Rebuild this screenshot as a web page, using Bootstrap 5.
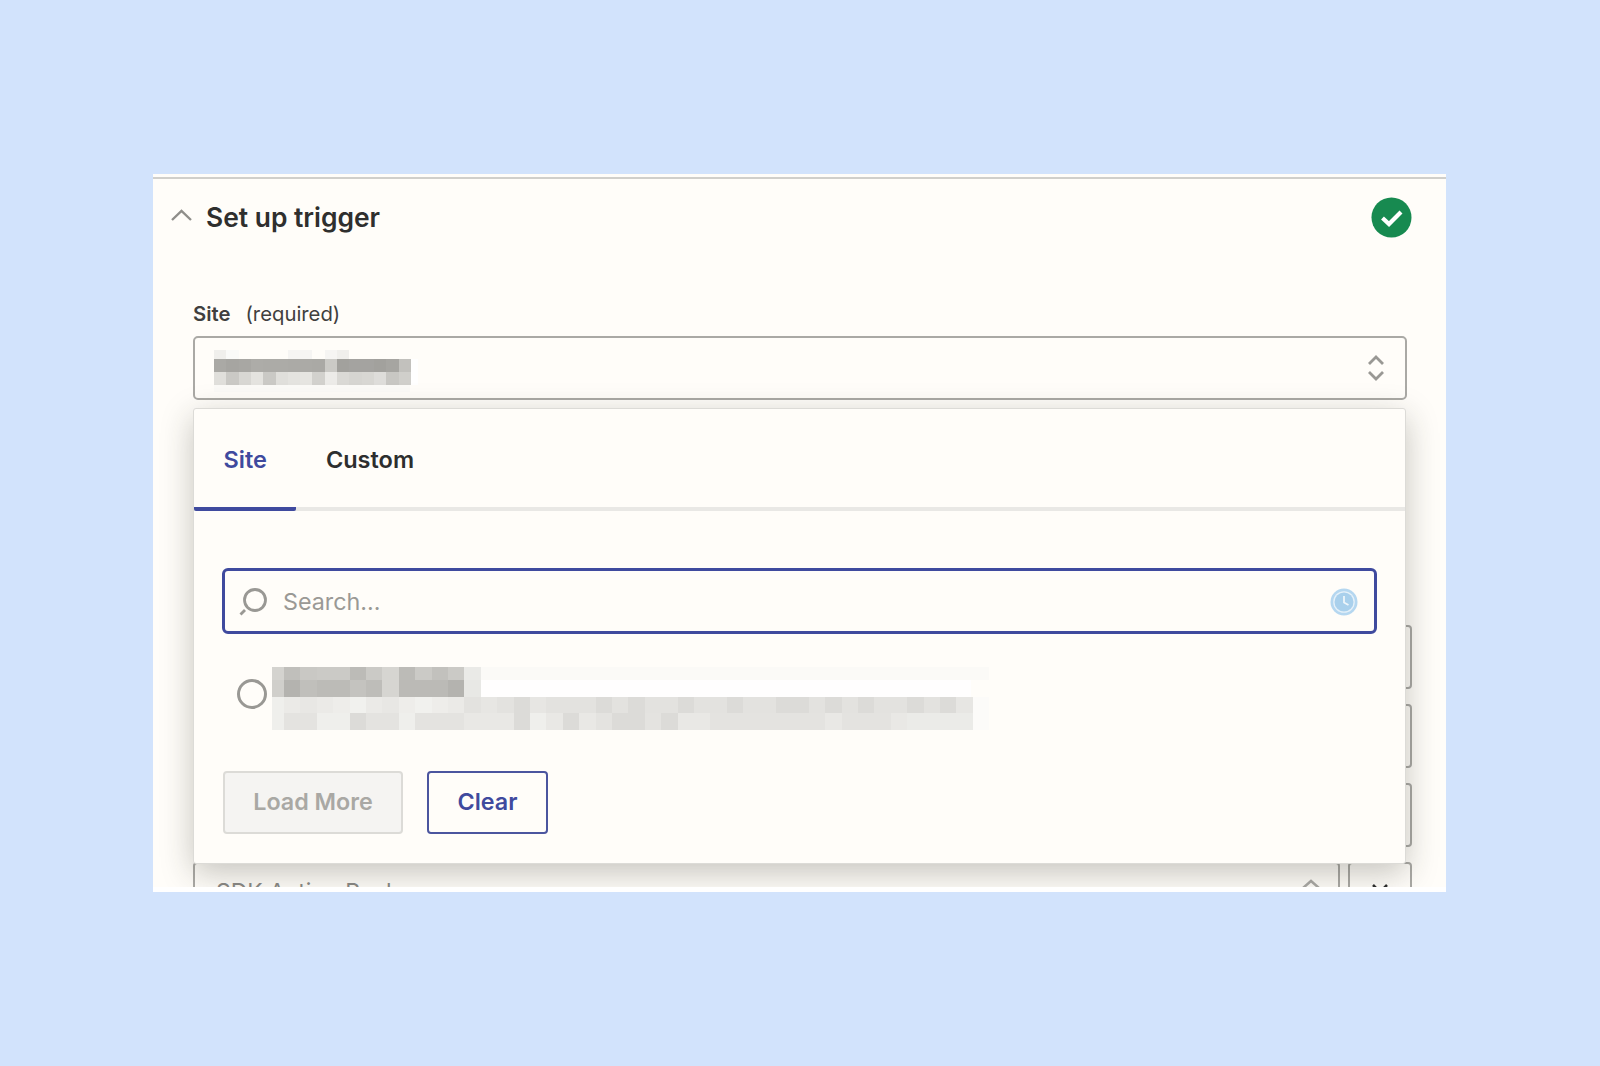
<!DOCTYPE html>
<html lang="en">
<head>
<meta charset="utf-8">
<title>Set up trigger</title>
<link href="https://cdn.jsdelivr.net/npm/bootstrap@5.3.0/dist/css/bootstrap.min.css" rel="stylesheet">
<style>
html,body{height:100%}
body{background:#d2e3fc;font-family:Inter,"Liberation Sans",sans-serif;color:#2d2e2e}
.stage{height:1066px;padding:174px 154px 0 153px}
.sheet{height:718px;background:#fff;padding-bottom:5px}
.sheet-clip{height:713px;background:#fffdf9;overflow:hidden;padding-top:3px}
.sheet-rule{height:2px;background:#d0cfcb}
.head-row{height:76px;padding:0 34px 0 18px}
.head-chev{margin-top:-4px}
.title-txt{font-size:26.4px;font-weight:600;margin:0 0 0 14px;line-height:1;color:#2f2f2e}
.ok-dot{width:41px;height:41px;margin-left:auto}
.body-wrap{padding:47px 34px 0 40px}
.lbl-row{height:24px;margin-bottom:10px;font-size:20.3px;line-height:24px;color:#403f3e}
.lbl-row b{font-weight:600}
.lbl-row span{margin-left:15px}
.pick-wrap{margin-right:5px}
.pick-box{height:64px;border:2px solid #aaa9a5;border-radius:5px;padding:0 20px 0 19px;background:#fffdf9}
.pop{left:0;right:1px;top:72px;height:456px;background:#fffdf9;border:1px solid #dcdbd7;border-radius:3px;box-shadow:0 9px 32px rgba(40,40,30,.27);z-index:5}
.tab-bar{height:102px;border-bottom:4px solid #e9e8e5}
.tab-item{height:102px;margin-bottom:-4px;border-bottom:4px solid transparent;padding:3px 29.5px 0;font-size:23.5px;font-weight:600;line-height:1;color:#2d2e2e;display:flex;align-items:center;border-radius:0 0 2px 2px}
.tab-item:hover{color:#2d2e2e}
.tab-on{color:#3f4a9e;border-bottom-color:#3f4a9e}
.tab-on:hover{color:#3f4a9e}
.pop-main{padding:57px 28px 0}
.find-box{height:66px;border:3px solid #3f4a9e;border-radius:6px;padding:2px 16px 0 13px}
.find-input{border:0;background:transparent;outline:0;flex:1;font-size:23.3px;padding:0;margin-left:15px;color:#2d2e2e}
.find-input::placeholder{color:#9a9995;opacity:1}
.res-row{height:137px;position:relative}
.res-radio.form-check-input{width:30px;height:30px;margin:45px 0 0 15px;border:3px solid #999894;background-color:transparent}
.res-blur{position:absolute;left:50px;top:28px}
.foot-row{gap:24px;margin-left:1px}
.act-btn{height:63px;font-size:23.3px;font-weight:600;border-radius:4px;padding:0 0 2px;line-height:1}
.act-load.btn:disabled{width:180px;background:#f5f4f2;border:2px solid #dcdbd7;color:#a9a8a4;opacity:1}
.act-clear.btn{width:121px;background:transparent;border:2px solid #4b559f;color:#3f4a9e}
.under-stack{margin-top:225px;gap:15px}
.under-row{height:64px}
.under-main{flex:1;border:2px solid #aaa9a5;border-radius:4px;padding:14px 17px 0 21px;font-size:23px;color:#8b8a86;line-height:28px}
.under-side{width:64px;margin-left:8px;border:2px solid #aaa9a5;border-radius:4px}
</style>
</head>
<body>
<div class="stage">
 <div class="sheet">
  <div class="sheet-clip">
   <div class="sheet-rule"></div>
   <div class="head-row d-flex align-items-center">
    <svg class="head-chev" width="21" height="12" viewBox="0 0 21 12" fill="none" stroke="#8f8e8a" stroke-width="2.4"><path d="M1 11 10.500 2 20 11"/></svg>
    <h1 class="title-txt">Set up trigger</h1>
    <svg class="ok-dot" viewBox="0 0 41 41"><circle cx="20.500" cy="20.500" r="20" fill="#178a50"/><path d="M11.500 21 18 27 30 15" fill="none" stroke="#fff" stroke-width="4.200"/></svg>
   </div>
   <div class="body-wrap">
    <div class="lbl-row"><b>Site</b><span>(required)</span></div>
    <div class="pick-wrap position-relative">
     <div class="pick-box d-flex align-items-center justify-content-between">
      <svg width="204" height="50" viewBox="0 0 204 50" shape-rendering="crispEdges">
       <g transform="translate(0,7)">
       <rect x="0" y="0" width="12.300" height="9" fill="#f0efec"/><rect x="12.300" y="0" width="12.300" height="9" fill="#fafaf8"/><rect x="73.800" y="0" width="24.600" height="9" fill="#f6f5f3"/><rect x="110.700" y="0" width="12.300" height="9" fill="#f6f5f3"/><rect x="123" y="0" width="12.300" height="9" fill="#f0efec"/>
       <rect x="0" y="9" width="12.300" height="13" fill="#aaa9a5"/><rect x="12.300" y="9" width="12.300" height="13" fill="#a6a5a1"/><rect x="24.600" y="9" width="12.300" height="13" fill="#a8a7a3"/><rect x="36.900" y="9" width="12.300" height="13" fill="#adaca8"/><rect x="49.200" y="9" width="24.600" height="13" fill="#acaba7"/><rect x="73.800" y="9" width="24.600" height="13" fill="#abaaa6"/><rect x="98.400" y="9" width="12.300" height="13" fill="#aaa9a5"/><rect x="110.700" y="9" width="12.300" height="13" fill="#cbcac6"/><rect x="123" y="9" width="12.300" height="13" fill="#a2a19d"/><rect x="135.300" y="9" width="24.600" height="13" fill="#a4a3a0"/><rect x="159.900" y="9" width="12.300" height="13" fill="#a2a19d"/><rect x="172.200" y="9" width="12.300" height="13" fill="#a6a5a1"/><rect x="184.500" y="9" width="12.300" height="13" fill="#c2c1bd"/>
       <rect x="0" y="22" width="12.300" height="13" fill="#e0dfdb"/><rect x="12.300" y="22" width="12.300" height="13" fill="#cac9c5"/><rect x="24.600" y="22" width="12.300" height="13" fill="#d8d7d3"/><rect x="36.900" y="22" width="12.300" height="13" fill="#e4e3df"/><rect x="49.200" y="22" width="12.300" height="13" fill="#cac9c5"/><rect x="61.500" y="22" width="12.300" height="13" fill="#e0dfdb"/><rect x="73.800" y="22" width="12.300" height="13" fill="#e4e3df"/><rect x="86.100" y="22" width="12.300" height="13" fill="#e6e5e1"/><rect x="98.400" y="22" width="12.300" height="13" fill="#d2d1cd"/><rect x="110.700" y="22" width="12.300" height="13" fill="#ecebe8"/><rect x="123" y="22" width="12.300" height="13" fill="#dad9d5"/><rect x="135.300" y="22" width="12.300" height="13" fill="#d6d5d1"/><rect x="147.600" y="22" width="12.300" height="13" fill="#d8d7d3"/><rect x="159.900" y="22" width="12.300" height="13" fill="#dedddA"/><rect x="172.200" y="22" width="12.300" height="13" fill="#c8c7c3"/><rect x="184.500" y="22" width="12.300" height="13" fill="#d0cfcb"/><rect x="196.800" y="9" width="7" height="26" fill="#fff"/>
       <rect x="0" y="35" width="196" height="7" fill="#fbfaf7"/>
       </g>
      </svg>
      <svg width="18" height="28" viewBox="0 0 18 28" fill="none" stroke="#999894" stroke-width="2.800"><path d="M2 10 9 3 16 10M2 18 9 25 16 18"/></svg>
     </div>
     <div class="pop position-absolute">
      <nav class="nav tab-bar">
       <a class="nav-link tab-item tab-on" href="#">Site</a>
       <a class="nav-link tab-item" href="#">Custom</a>
      </nav>
      <div class="pop-main">
       <div class="find-box d-flex align-items-center">
        <svg width="30" height="30" viewBox="0 0 30 30" fill="none" stroke="#999894" stroke-width="2.800"><circle cx="17" cy="13" r="10.500"/><path d="M2.500 27.500 7 23"/></svg>
        <input class="find-input" type="text" placeholder="Search...">
        <svg width="28" height="28" viewBox="0 0 28 28"><circle cx="14" cy="14" r="13.500" fill="#b5d7f0"/><circle cx="14" cy="14" r="10.800" fill="#e6f1f9"/><circle cx="14" cy="14" r="9.500" fill="#a9d0ec"/><path d="M14 8V14.500L18.500 17" fill="none" stroke="#eef5fa" stroke-width="1.800"/></svg>
       </div>
       <div class="res-row">
        <input class="form-check-input res-radio" type="radio" name="siteres">
        <svg class="res-blur" width="730" height="72" viewBox="0 0 730 72" shape-rendering="crispEdges">
         <rect x="209" y="5" width="508" height="13" fill="#fbfaf7"/><rect x="209" y="18" width="490" height="17" fill="#fffefe"/><rect x="701" y="35" width="16" height="33" fill="#fcfbf9"/>
         <g transform="translate(0,5)">
         <rect x="0" y="0" width="12" height="13" fill="#d4d3cf"/><rect x="12" y="0" width="16.400" height="13" fill="#c0bfbb"/><rect x="28.400" y="0" width="16.400" height="13" fill="#c9c8c4"/><rect x="44.800" y="0" width="32.800" height="13" fill="#cbcac6"/><rect x="77.600" y="0" width="16.400" height="13" fill="#bcbbb7"/><rect x="94" y="0" width="16.400" height="13" fill="#cbcac6"/><rect x="110.400" y="0" width="16.400" height="13" fill="#d6d5d1"/><rect x="126.800" y="0" width="16.400" height="13" fill="#bcbbb7"/><rect x="143.200" y="0" width="16.400" height="13" fill="#cbcac6"/><rect x="159.600" y="0" width="16.400" height="13" fill="#c2c1bd"/><rect x="176" y="0" width="16.400" height="13" fill="#cbcac6"/><rect x="192.400" y="0" width="16.400" height="13" fill="#eaeae7"/>
         <rect x="0" y="13" width="12" height="17" fill="#d0cfcb"/><rect x="12" y="13" width="16.400" height="17" fill="#b4b3af"/><rect x="28.400" y="13" width="16.400" height="17" fill="#c0bfbb"/><rect x="44.800" y="13" width="32.800" height="17" fill="#bcbbb7"/><rect x="77.600" y="13" width="16.400" height="17" fill="#c4c3bf"/><rect x="94" y="13" width="16.400" height="17" fill="#bebdb9"/><rect x="110.400" y="13" width="16.400" height="17" fill="#d6d5d1"/><rect x="126.800" y="13" width="49.200" height="17" fill="#bbbab6"/><rect x="176" y="13" width="16.400" height="17" fill="#b4b3af"/><rect x="192.400" y="13" width="16.400" height="17" fill="#e8e8e5"/>
         <path fill="#efefec" d="M0 30h12v16H0z"/>
         <path fill="#ebeae7" d="M12 30h16.400v16H12zM44.800 30h16.400v16H44.800zM94 30h16.400v16H94zM176 30h16.400v16H176z"/>
         <path fill="#e8e7e4" d="M28.400 30h16.400v16H28.400zM110.400 30h16.400v16h-16.400z"/>
         <path fill="#f1f1ee" d="M77.600 30h16.400v16H77.600zM143.200 30h16.400v16h-16.400z"/>
         <path fill="#eeedea" d="M61.200 30h16.400v16H61.200zM126.800 30h16.400v16h-16.400zM159.600 30h16.400v16h-16.400z"/>
         <path fill="#e3e2df" d="M192.400 30h16.400v16h-16.400zM225.200 30h16.400v16h-16.400zM274.400 30h16.400v16h-16.400zM290.800 30h16.400v16h-16.400zM307.200 30h16.400v16h-16.400zM340 30h16.400v16H340zM372.800 30h16.400v16h-16.400zM389.200 30h16.400v16h-16.400zM421.800 30h16.400v16h-16.400zM438.200 30h16.400v16h-16.400zM471 30h32.800v16H471zM536.800 30h16.400v16h-16.400zM569.600 30h16.400v16h-16.400zM602.400 30h16.400v16h-16.400zM618.800 30h16.400v16h-16.400zM651.600 30h16.400v16h-16.400z"/>
         <path fill="#dcdbd8" d="M241.600 30h16.400v16h-16.400zM323.600 30h16.400v16H323.600zM356.400 30h16.400v16h-16.400zM405.600 30h16.200v16h-16.200zM454.600 30h16.400v16h-16.400zM503.800 30h32.800v16h-32.800zM553.200 30h16.400v16h-16.400zM586 30h16.400v16H586zM635.200 30h16.400v16h-16.400zM668 30h16.400v16H668z"/>
         <path fill="#e7e6e3" d="M208.800 30h16.400v16h-16.400zM258 30h16.400v16H258zM684.400 30h16.400v16h-16.400z"/>
         <path fill="#efefec" d="M0 46h12v17H0zM44.800 46h32.800v17H44.800zM126.800 46h16.400v17h-16.400zM258 46h16.400v17H258z"/>
         <path fill="#e4e3e0" d="M12 46h32.800v17H12zM94 46h32.800v17H94zM143.200 46h49.200v17h-49.200zM323.600 46h16.400v17h-16.400zM372.800 46h16.400v17h-16.400zM438.200 46h16.400v17h-16.400zM454.600 46h98.400v17h-98.400zM569.600 46h49.200v17h-49.200z"/>
         <path fill="#dcdbd8" d="M77.600 46h16.400v17H77.600zM241.600 46h16.400v17h-16.400zM290.800 46h16.400v17h-16.400zM340 46h32.800v17H340zM389.200 46h16.400v17h-16.400z"/>
         <path fill="#e9e8e5" d="M192.400 46h49.200v17h-49.200zM274.400 46h16.400v17h-16.400zM307.200 46h16.400v17h-16.400zM405.600 46h32.800v17h-32.800zM553.200 46h16.400v17h-16.400zM618.800 46h16.400v17h-16.400z"/>
         <path fill="#ebebe8" d="M635.200 46h65.600v17h-65.600z"/>
         </g>
        </svg>
       </div>
       <div class="foot-row d-flex">
        <button class="btn act-btn act-load" type="button" disabled>Load More</button>
        <button class="btn act-btn act-clear" type="button">Clear</button>
       </div>
      </div>
     </div>
    </div>
    <div class="under-stack d-flex flex-column">
     <div class="under-row d-flex"><div class="under-main"></div><div class="under-side"></div></div>
     <div class="under-row d-flex"><div class="under-main"></div><div class="under-side"></div></div>
     <div class="under-row d-flex"><div class="under-main"></div><div class="under-side"></div></div>
     <div class="under-row d-flex">
      <div class="under-main d-flex justify-content-between"><span>SDK Action Pack</span><svg width="20" height="12" viewBox="0 0 20 12" fill="none" stroke="#aaa9a5" stroke-width="2.500"><path d="M2 10 10 3 18 10"/></svg></div>
      <div class="under-side d-flex justify-content-center pt-3"><svg width="18" height="14" viewBox="0 0 18 14" fill="none" stroke="#2d2e2e" stroke-width="2.600"><path d="M2 5 9 12 16 5"/></svg></div>
     </div>
    </div>
   </div>
  </div>
 </div>
</div>
<script src="https://cdn.jsdelivr.net/npm/bootstrap@5.3.0/dist/js/bootstrap.bundle.min.js"></script>
</body>
</html>
